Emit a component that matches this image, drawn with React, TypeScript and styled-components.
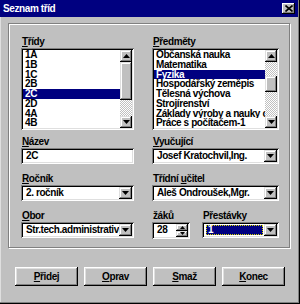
import React from 'react';
import styled, { createGlobalStyle } from 'styled-components';

const GlobalStyle = createGlobalStyle`
  html, body {
    margin: 0;
    padding: 0;
    background: #c0c0c0;
  }
  body {
    font-family: "Liberation Sans", Arial, sans-serif;
    font-size: 10px;
    font-weight: bold;
    letter-spacing: -0.4px;
    color: #000;
  }
`;

const Window = styled.div`
  width: 300px;
  height: 304px;
  box-sizing: border-box;
  background: #c0c0c0;
  box-shadow: inset -1px -1px #000, inset -2px -2px #808080, inset 1px 0 #dfdfdf;
  display: flex;
  flex-direction: column;
`;

const TitleBar = styled.div`
  height: 17px;
  margin-right: 2px;
  background: #000080;
  color: #fff;
  display: flex;
  align-items: center;
  justify-content: space-between;
  padding: 0 3px 0 3px;
  box-sizing: border-box;
`;

const TitleText = styled.span`
  line-height: 17px;
`;

const CloseButton = styled.div`
  width: 13px;
  height: 11px;
  background: #c0c0c0;
  box-shadow: inset -1px -1px #000, inset 1px 1px #fff, inset -2px -2px #808080;
  display: flex;
  align-items: center;
  justify-content: center;
`;

const GroupBox = styled.div`
  margin: 6px 0 0 8px;
  width: 282px;
  height: 225px;
  box-sizing: border-box;
  border: 1px solid #808080;
  box-shadow: 1px 1px 0 #fff, inset 1px 1px 0 #fff;
  padding: 11px 0 0 12px;
  display: grid;
  grid-template-columns: 113px 127px;
  column-gap: 18px;
  align-items: start;
`;

const Column = styled.div`
  display: flex;
  flex-direction: column;
`;

const Field = styled.div<{ $top?: number; $width?: number }>`
  display: flex;
  flex-direction: column;
  margin-top: ${(p) => p.$top ?? 0}px;
  width: ${(p) => (p.$width ? `${p.$width}px` : 'auto')};
`;

const FieldRow = styled.div<{ $top?: number }>`
  display: flex;
  gap: 12px;
  margin-top: ${(p) => p.$top ?? 0}px;
`;

const Label = styled.div`
  height: 13px;
  line-height: 13px;
  padding-left: 1px;
  white-space: nowrap;
`;

const U = styled.span`
  text-decoration: underline;
`;

const Sunken = styled.div<{ $height: number }>`
  height: ${(p) => p.$height}px;
  box-sizing: border-box;
  padding: 2px;
  background: #fff;
  box-shadow: inset 1px 1px #808080, inset -1px -1px #fff, inset 2px 2px #000, inset -2px -2px #dfdfdf;
  display: flex;
  overflow: hidden;
`;

const Items = styled.div`
  flex: 1;
  min-width: 0;
  display: flex;
  flex-direction: column;
  overflow: hidden;
`;

const Item = styled.div<{ $selected?: boolean }>`
  height: 10px;
  line-height: 10px;
  padding-left: 2px;
  white-space: nowrap;
  overflow: hidden;
  background: ${(p) => (p.$selected ? '#000080' : '#fff')};
  color: ${(p) => (p.$selected ? '#fff' : '#000')};
`;

const ScrollBar = styled.div`
  width: 12px;
  display: flex;
  flex-direction: column;
`;

const Raised = styled.div<{ $w?: number; $h?: number }>`
  width: ${(p) => (p.$w ? `${p.$w}px` : 'auto')};
  height: ${(p) => (p.$h ? `${p.$h}px` : 'auto')};
  flex-shrink: 0;
  background: #c0c0c0;
  box-shadow: inset -1px -1px #000, inset 1px 1px #dfdfdf, inset -2px -2px #808080, inset 2px 2px #fff;
  display: flex;
  align-items: center;
  justify-content: center;
`;

const Track = styled.div`
  flex: 1;
  display: flex;
  flex-direction: column;
  background: repeating-conic-gradient(#c0c0c0 0 25%, #fff 0 50%) 0 0 / 2px 2px;
`;

const Thumb = styled(Raised)<{ $top: number }>`
  margin-top: ${(p) => p.$top}px;
`;

const FieldText = styled.div`
  flex: 1;
  min-width: 0;
  padding-left: 3px;
  line-height: 12px;
  white-space: nowrap;
  overflow: hidden;
`;

const Selected = styled.div`
  flex: 1;
  margin: 1px 1px 1px 2px;
  background: #000080;
  color: #fff;
  border: 1px dotted #d8d800;
  line-height: 8px;
  padding-left: 1px;
`;

const SpinButtons = styled.div`
  width: 12px;
  display: flex;
  flex-direction: column;
`;

const SpinButton = styled(Raised)`
  flex: 1;
`;

const ButtonRow = styled.div`
  display: flex;
  gap: 6px;
  margin-top: 19px;
  padding-left: 15px;
`;

const PushButton = styled.div`
  width: 63px;
  height: 19px;
  background: #c0c0c0;
  box-shadow: inset -1px -1px #000, inset 1px 1px #fff, inset -2px -2px #808080, inset 2px 2px #dfdfdf;
  line-height: 19px;
  text-align: center;
`;

const Arrow: React.FC<{ up?: boolean; small?: boolean }> = ({ up, small }) => {
  const w = small ? 5 : 7;
  const h = small ? 3 : 4;
  const points = up ? `0,${h} ${w},${h} ${w / 2},0` : `0,0 ${w},0 ${w / 2},${h}`;
  return (
    <svg width={w} height={h} viewBox={`0 0 ${w} ${h}`}>
      <polygon points={points} fill="#000" />
    </svg>
  );
};

const Scroller: React.FC<{ thumbTop: number; thumbHeight: number }> = ({ thumbTop, thumbHeight }) => (
  <ScrollBar>
    <Raised $w={12} $h={12}>
      <Arrow up />
    </Raised>
    <Track>
      <Thumb $top={thumbTop} $h={thumbHeight} />
    </Track>
    <Raised $w={12} $h={12}>
      <Arrow />
    </Raised>
  </ScrollBar>
);

const ListBox: React.FC<{ items: string[]; selected: string; thumbTop: number; thumbHeight: number }> = ({
  items,
  selected,
  thumbTop,
  thumbHeight,
}) => (
  <Sunken $height={82}>
    <Items>
      {items.map((it) => (
        <Item key={it} $selected={it === selected}>
          {it}
        </Item>
      ))}
    </Items>
    <Scroller thumbTop={thumbTop} thumbHeight={thumbHeight} />
  </Sunken>
);

const Combo: React.FC<{ children: React.ReactNode }> = ({ children }) => (
  <Sunken $height={16}>
    {children}
    <Raised $w={13}>
      <Arrow />
    </Raised>
  </Sunken>
);

const classes = ['1A', '1B', '1C', '2B', '2C', '2D', '4A', '4B'];
const subjects = [
  'Občanská nauka',
  'Matematika',
  'Fyzika',
  'Hospodářský zeměpis',
  'Tělesná výchova',
  'Strojírenství',
  'Základy výroby a nauky o materiálu',
  'Práce s počítačem-1',
];

export default function App() {
  return (
    <>
      <GlobalStyle />
      <Window>
        <TitleBar>
          <TitleText>Seznam tříd</TitleText>
          <CloseButton>
            <svg width="8" height="7" viewBox="0 0 8 7">
              <path d="M0.5 0.5 L7.5 6.5 M7.5 0.5 L0.5 6.5" stroke="#000" strokeWidth="1.6" />
            </svg>
          </CloseButton>
        </TitleBar>

        <GroupBox>
          <Column>
            <Field>
              <Label>
                <U>T</U>řídy
              </Label>
              <ListBox items={classes} selected="2C" thumbTop={0} thumbHeight={38} />
            </Field>
            <Field $top={5}>
              <Label>
                <U>N</U>ázev
              </Label>
              <Sunken $height={16}>
                <FieldText>2C</FieldText>
              </Sunken>
            </Field>
            <Field $top={8}>
              <Label>
                <U>R</U>očník
              </Label>
              <Combo>
                <FieldText>2. ročník</FieldText>
              </Combo>
            </Field>
            <Field $top={8}>
              <Label>
                <U>O</U>bor
              </Label>
              <Combo>
                <FieldText>Str.tech.administrativa</FieldText>
              </Combo>
            </Field>
          </Column>

          <Column>
            <Field>
              <Label>
                <U>P</U>ředměty
              </Label>
              <ListBox items={subjects} selected="Fyzika" thumbTop={14} thumbHeight={16} />
            </Field>
            <Field $top={5}>
              <Label>
                <U>V</U>yučující
              </Label>
              <Combo>
                <FieldText>Josef Kratochvil,Ing.</FieldText>
              </Combo>
            </Field>
            <Field $top={8}>
              <Label>
                Třídní <U>u</U>čitel
              </Label>
              <Combo>
                <FieldText>Aleš Ondroušek,Mgr.</FieldText>
              </Combo>
            </Field>
            <FieldRow $top={8}>
              <Field $width={38}>
                <Label>žáků</Label>
                <Sunken $height={17}>
                  <FieldText>28</FieldText>
                  <SpinButtons>
                    <SpinButton>
                      <Arrow up small />
                    </SpinButton>
                    <SpinButton>
                      <Arrow small />
                    </SpinButton>
                  </SpinButtons>
                </Sunken>
              </Field>
              <Field $width={77}>
                <Label>Přestávky</Label>
                <Combo>
                  <Selected>1</Selected>
                </Combo>
              </Field>
            </FieldRow>
          </Column>
        </GroupBox>

        <ButtonRow>
          <PushButton>
            <U>P</U>řidej
          </PushButton>
          <PushButton>
            <U>O</U>prav
          </PushButton>
          <PushButton>
            <U>S</U>maž
          </PushButton>
          <PushButton>
            <U>K</U>onec
          </PushButton>
        </ButtonRow>
      </Window>
    </>
  );
}
